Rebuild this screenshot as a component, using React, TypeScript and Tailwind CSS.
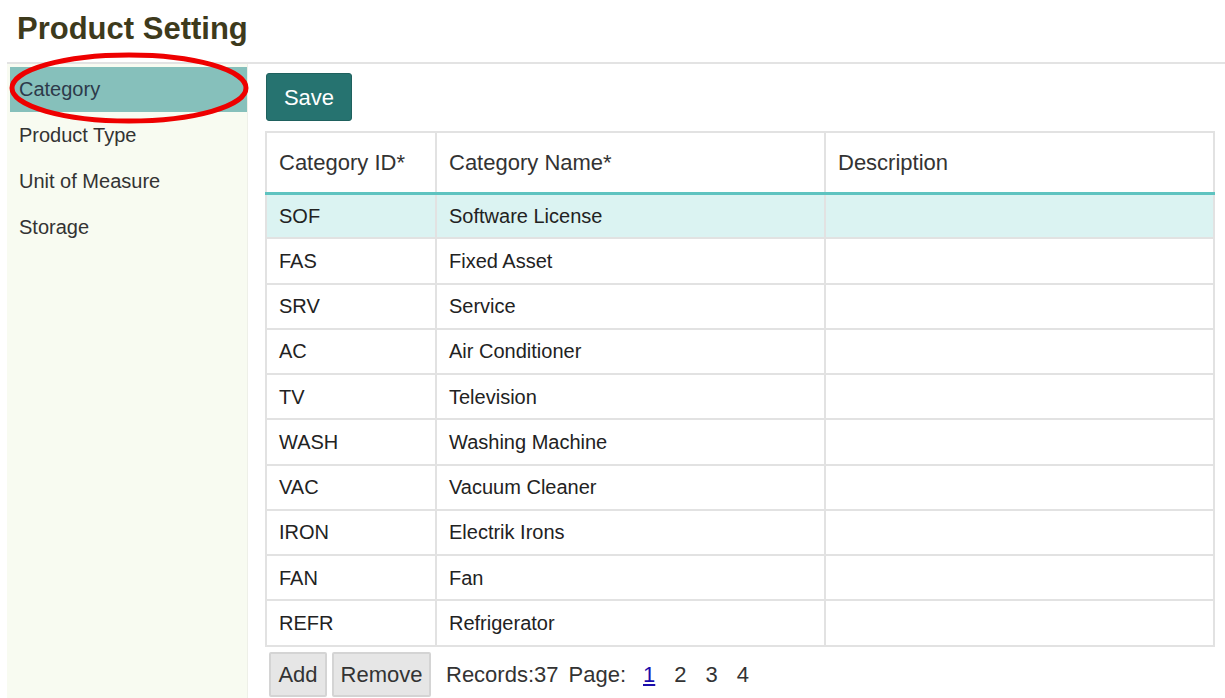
import React from "react";

const rows: [string, string][] = [
  ["SOF", "Software License"],
  ["FAS", "Fixed Asset"],
  ["SRV", "Service"],
  ["AC", "Air Conditioner"],
  ["TV", "Television"],
  ["WASH", "Washing Machine"],
  ["VAC", "Vacuum Cleaner"],
  ["IRON", "Electrik Irons"],
  ["FAN", "Fan"],
  ["REFR", "Refrigerator"],
];

const menu = ["Category", "Product Type", "Unit of Measure", "Storage"];

export default function App() {
  return (
    <div
      className="relative w-[1225px] h-[698px] overflow-hidden bg-white text-[#333]"
      style={{ fontFamily: '"Liberation Sans", Arial, sans-serif' }}
    >
      <h1 className="pl-[17px] pt-[11px] h-[62px] text-[31px] font-bold leading-[36px] text-[#3d3a1c]">
        Product Setting
      </h1>
      <div className="ml-[7px] border-t-[2px] border-[#e3e3e3] flex h-[636px]">
        <div className="w-[241px] bg-[#f8fbf1] pt-[3px] border-r border-[#eef0e8]">
          {menu.map((m, i) => (
            <div
              key={m}
              className={
                i === 0
                  ? "ml-[3px] h-[45px] bg-[#86c0bb] pl-[9px] text-[20px] leading-[45px] text-[#2d3a4a]"
                  : "ml-[3px] h-[46px] pl-[9px] text-[20px] leading-[46px] text-[#333]"
              }
            >
              {m}
            </div>
          ))}
        </div>
        <div className="pl-[17px] pt-[9px]">
          <button className="ml-[1px] w-[86px] h-[48px] rounded-[3px] bg-[#267370] text-white text-[22px] border border-[#1f615e]">
            Save
          </button>
          <table className="mt-[10px] border-collapse text-[20px] table-fixed w-[948px]">
            <colgroup>
              <col className="w-[170px]" />
              <col className="w-[389px]" />
              <col className="w-[389px]" />
            </colgroup>
            <thead>
              <tr className="h-[61px]">
                {["Category ID*", "Category Name*", "Description"].map((h) => (
                  <th
                    key={h}
                    className="border-2 border-b-[3px] border-[#e2e2e2] border-b-[#5ec3c0] px-[12px] text-left font-normal text-[22px] text-[#333]"
                  >
                    {h}
                  </th>
                ))}
              </tr>
            </thead>
            <tbody>
              {rows.map(([id, name], i) => (
                <tr key={id} className={i === 0 ? "h-[45.25px] bg-[#dbf3f2]" : "h-[45.25px]"}>
                  <td className="border-2 border-[#e2e2e2] px-[12px] text-[#222]">{id}</td>
                  <td className="border-2 border-[#e2e2e2] px-[12px] text-[#222]">{name}</td>
                  <td className="border-2 border-[#e2e2e2] px-[12px]"></td>
                </tr>
              ))}
            </tbody>
          </table>
          <div className="mt-[5px] flex items-center text-[22px] text-[#333]">
            <button className="ml-[4px] w-[58px] h-[45px] bg-[#e6e6e6] border-2 border-[#d4d4d4] rounded-[2px] text-[22px] text-[#333]">
              Add
            </button>
            <button className="ml-[5px] w-[99px] h-[45px] bg-[#e6e6e6] border-2 border-[#d4d4d4] rounded-[2px] text-[22px] text-[#333]">
              Remove
            </button>
            <span className="ml-[15px]">Records:37</span>
            <span className="ml-[10px]">Page:</span>
            <span className="ml-[17px] text-[#1a0dab] underline">1</span>
            <span className="ml-[19px]">2</span>
            <span className="ml-[19px]">3</span>
            <span className="ml-[19px]">4</span>
          </div>
        </div>
      </div>
      <svg className="absolute left-0 top-0 pointer-events-none" width="260" height="130">
        <ellipse cx="129" cy="88" rx="117" ry="33" fill="none" stroke="#ee0000" strokeWidth="5" />
      </svg>
    </div>
  );
}
